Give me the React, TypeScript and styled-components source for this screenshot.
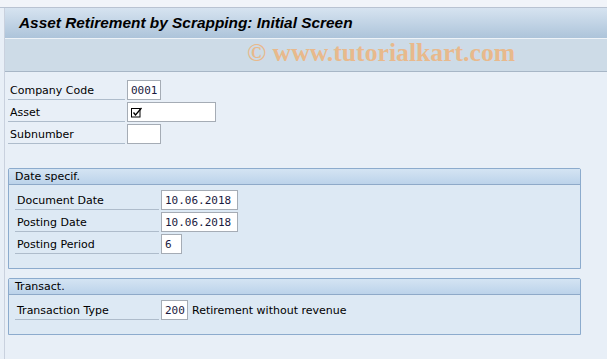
import * as React from 'react';
import styled, { createGlobalStyle } from 'styled-components';

const GlobalStyle = createGlobalStyle`
  html, body {
    margin: 0;
    padding: 0;
    background: #e8eff7;
  }
  body {
    width: 607px;
    height: 359px;
    overflow: hidden;
    font-family: "DejaVu Sans", "Liberation Sans", sans-serif;
  }
`;

const Root = styled.div`
  display: flex;
  flex-direction: column;
  width: 607px;
  height: 359px;
  background: #e8eff7;
`;

const TopStrip = styled.div`
  height: 7px;
  background: #f1f4f9;
  border-bottom: 1px solid #b9c3d2;
`;

const Frame = styled.div`
  flex: 1;
  display: flex;
  flex-direction: column;
  margin-left: 4px;
  border-left: 1px solid #c9d1de;
`;

const TitleBar = styled.div`
  height: 30px;
  display: flex;
  align-items: center;
  padding-left: 14px;
  background: linear-gradient(#d6e3f0, #adc4da);
  border-bottom: 1px solid #eef3f8;
`;

const Title = styled.h1`
  margin: 0;
  font-family: "Liberation Sans", sans-serif;
  font-size: 15.4px;
  font-weight: bold;
  font-style: italic;
  color: #000;
`;

const Toolbar = styled.div`
  height: 32px;
  background: #cddbe7;
  border-bottom: 1px solid #a7b6c6;
  display: flex;
  align-items: flex-start;
  padding-left: 242px;
`;

const Watermark = styled.span`
  font-family: "Liberation Serif", serif;
  font-weight: bold;
  font-size: 25.7px;
  line-height: 28px;
  color: #e8b98c;
`;

const Content = styled.div`
  display: flex;
  flex-direction: column;
  padding: 8px 0 0 3px;
`;

const Fields = styled.div`
  display: flex;
  flex-direction: column;
  gap: 2px;
  margin-bottom: 24px;
`;

const Row = styled.div`
  display: flex;
  align-items: center;
  height: 20px;
`;

const Label = styled.div<{ $width: number }>`
  width: ${({ $width }) => $width}px;
  height: 20px;
  box-sizing: border-box;
  padding: 4px 0 0 2px;
  margin-right: 2px;
  font-size: 11px;
  color: #000;
  border-bottom: 1px solid #aebccb;
`;

const Input = styled.div<{ $width: number }>`
  width: ${({ $width }) => $width}px;
  height: 20px;
  box-sizing: border-box;
  display: flex;
  align-items: center;
  padding: 0 3px;
  background: #fff;
  border: 1px solid #a5acb5;
  font-family: "DejaVu Sans Mono", monospace;
  font-size: 11px;
  color: #1a1a40;
`;

const Hint = styled.span`
  margin-left: 4px;
  font-size: 11px;
  color: #000;
`;

const Group = styled.section<{ $height: number }>`
  width: 573px;
  height: ${({ $height }) => $height}px;
  box-sizing: border-box;
  border: 1px solid #8cabcd;
  border-radius: 2px 2px 0 0;
  background: #dde9f4;
  margin-bottom: 9px;
  display: flex;
  flex-direction: column;
`;

const GroupHeader = styled.div`
  height: 16px;
  box-sizing: border-box;
  padding: 1px 0 0 6px;
  background: linear-gradient(#d4e4f3, #bcd3ea);
  border-bottom: 1px solid #8ea9c8;
  font-size: 11px;
  color: #000;
`;

const GroupBody = styled.div`
  display: flex;
  flex-direction: column;
  gap: 2px;
  padding: 5px 0 0 6px;
`;

const RequiredMark = () => (
  <svg width="11" height="11" viewBox="0 0 11 11">
    <rect x="0.5" y="1.5" width="8.5" height="8.5" fill="none" stroke="#000" strokeWidth="1" />
    <path d="M2.5 5.5 L4.5 8 L10.5 1" fill="none" stroke="#000" strokeWidth="1.3" />
  </svg>
);

const App: React.FunctionComponent = () => {
  return (
    <Root>
      <GlobalStyle />
      <TopStrip />
      <Frame>
        <TitleBar>
          <Title>Asset Retirement by Scrapping: Initial Screen</Title>
        </TitleBar>
        <Toolbar>
          <Watermark>© www.tutorialkart.com</Watermark>
        </Toolbar>
        <Content>
          <Fields>
            <Row>
              <Label $width={117}>Company Code</Label>
              <Input $width={34}>0001</Input>
            </Row>
            <Row>
              <Label $width={117}>Asset</Label>
              <Input $width={89}><RequiredMark /></Input>
            </Row>
            <Row>
              <Label $width={117}>Subnumber</Label>
              <Input $width={34} />
            </Row>
          </Fields>

          <Group $height={101}>
            <GroupHeader>Date specif.</GroupHeader>
            <GroupBody>
              <Row>
                <Label $width={144}>Document Date</Label>
                <Input $width={77}>10.06.2018</Input>
              </Row>
              <Row>
                <Label $width={144}>Posting Date</Label>
                <Input $width={77}>10.06.2018</Input>
              </Row>
              <Row>
                <Label $width={144}>Posting Period</Label>
                <Input $width={21}>6</Input>
              </Row>
            </GroupBody>
          </Group>

          <Group $height={57}>
            <GroupHeader>Transact.</GroupHeader>
            <GroupBody>
              <Row>
                <Label $width={144}>Transaction Type</Label>
                <Input $width={27}>200</Input>
                <Hint>Retirement without revenue</Hint>
              </Row>
            </GroupBody>
          </Group>
        </Content>
      </Frame>
    </Root>
  );
};

export default App;
